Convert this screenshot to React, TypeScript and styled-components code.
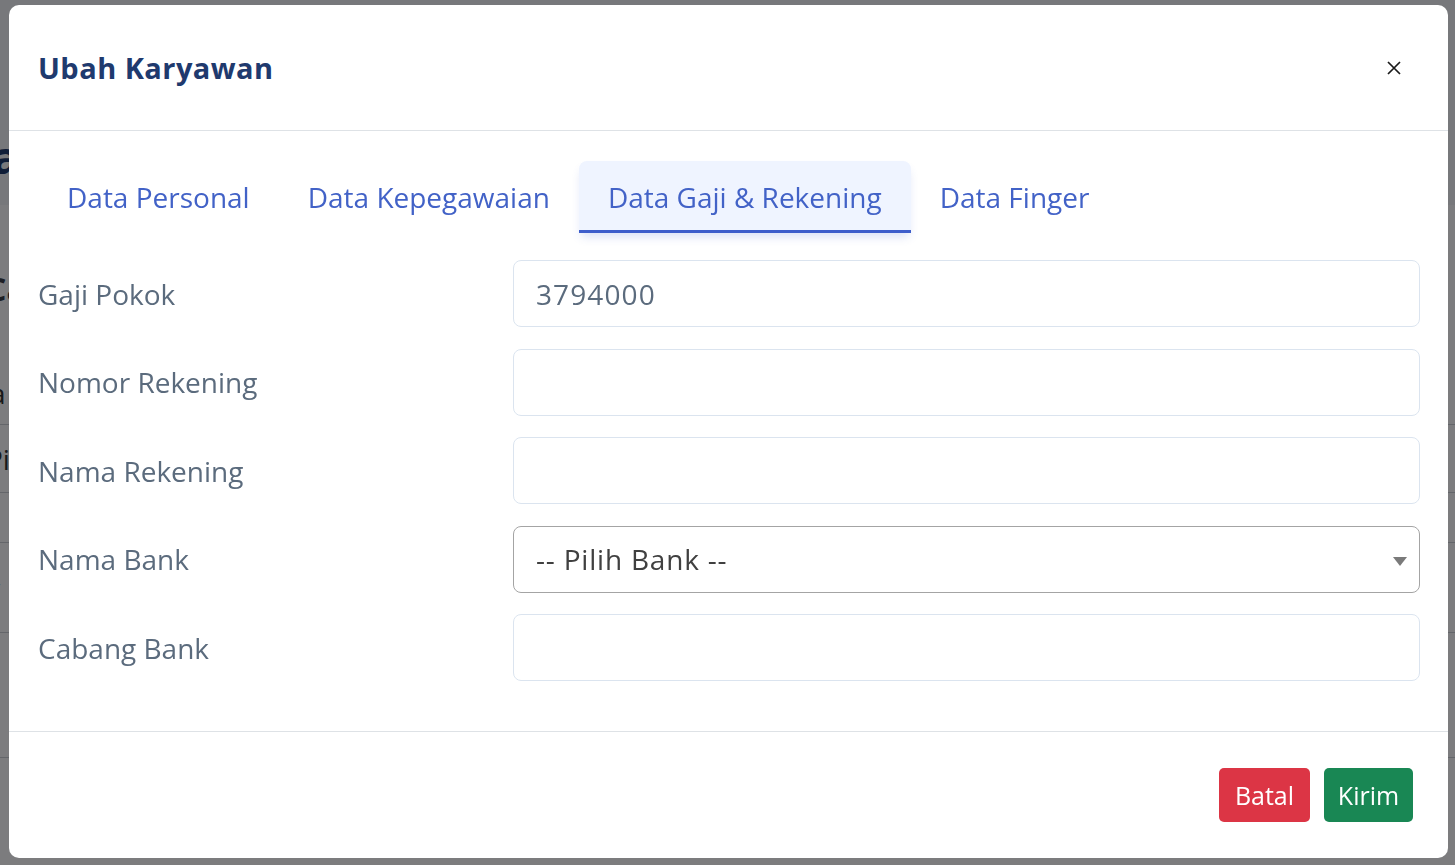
import React from "react";
import styled, { createGlobalStyle } from "styled-components";

const GlobalStyle = createGlobalStyle`
  html, body { margin: 0; padding: 0; }
  body {
    width: 1455px;
    height: 865px;
    overflow: hidden;
    background: #f8f9fd;
    font-family: "Open Sans", "Noto Sans", sans-serif;
  }
  * { box-sizing: border-box; }
`;

const FONT = `"Open Sans", "Noto Sans", sans-serif`;

/* ---------- background page (behind the backdrop) ---------- */
const Page = styled.div`
  width: 1455px;
  height: 865px;
  display: flex;
  flex-direction: column;
  font-family: ${FONT};
`;

const PageTop = styled.div`
  height: 205px;
  background: #eef0f6;
  color: #1f3a6e;
  font-size: 44px;
  font-weight: 700;
  display: flex;
  align-items: flex-end;
  padding-bottom: 18px;
  margin-left: -40px;
`;

const PageCard = styled.div`
  height: 220px;
  display: flex;
  flex-direction: column;
  justify-content: space-between;
  padding: 62px 0 12px;
  border-bottom: 1px solid #c9ccd4;
  color: #333;
  font-size: 28px;
  margin-left: -10px;
`;

const CardTitle = styled.div`
  font-weight: 700;
  font-size: 32px;
  color: #3a3f4a;
  margin-left: -4px;
`;

const PageRow = styled.div<{ $h: number }>`
  height: ${(p) => p.$h}px;
  border-bottom: 1px solid #c9ccd4;
  color: #333;
  font-size: 28px;
  display: flex;
  align-items: center;
  margin-left: -14px;
`;

/* ---------- overlay + modal ---------- */
const Backdrop = styled.div`
  position: fixed;
  inset: 0;
  background: rgba(0, 0, 0, 0.5);
  display: flex;
  align-items: flex-start;
  padding: 5px 7px 0 9px;
`;

const Modal = styled.div`
  width: 1439px;
  background: #ffffff;
  border-radius: 10px;
  display: flex;
  flex-direction: column;
  font-family: ${FONT};
`;

const Header = styled.div`
  height: 126px;
  display: flex;
  align-items: center;
  justify-content: space-between;
  padding: 0 46px 0 29px;
  border-bottom: 1px solid #dee2e6;
`;

const Title = styled.h5`
  margin: 0;
  font-size: 29px;
  font-weight: 700;
  color: #1f3a6e;
  letter-spacing: 0.45px;
`;

const CloseButton = styled.button`
  width: 16px;
  height: 16px;
  padding: 0;
  border: 0;
  background: transparent;
  display: flex;
  align-items: center;
  justify-content: center;
  cursor: pointer;
`;

const Body = styled.div`
  padding: 30px 28px 50px 29px;
  display: flex;
  flex-direction: column;
`;

const TabList = styled.div`
  display: flex;
  height: 72px;
  margin-bottom: 27px;
`;

const Tab = styled.div<{ $active?: boolean }>`
  height: 72px;
  padding: 2px 29px 0;
  display: flex;
  align-items: center;
  font-size: 28px;
  color: #4262c7;
  border-radius: 8px 8px 0 0;
  background: ${(p) => (p.$active ? "#eff4ff" : "transparent")};
  border-bottom: 3px solid ${(p) => (p.$active ? "#3e5ecb" : "transparent")};
  box-shadow: ${(p) =>
    p.$active ? "0 6px 10px -2px rgba(62, 94, 203, 0.18)" : "none"};
`;

const Rows = styled.div`
  display: flex;
  flex-direction: column;
  gap: 21.5px;
`;

const Row = styled.div`
  display: grid;
  grid-template-columns: 475px 1fr;
  align-items: center;
`;

const Label = styled.label`
  font-size: 28px;
  color: #5b6b7d;
`;

const Input = styled.input`
  height: 67px;
  width: 100%;
  border: 1px solid #dbe4ef;
  border-radius: 8px;
  padding: 0 22px;
  font-family: ${FONT};
  font-size: 28px;
  letter-spacing: 1.1px;
  color: #5b6b7d;
  background: #fff;
  outline: none;
`;

const SelectBox = styled.div`
  height: 67px;
  width: 100%;
  border: 1px solid #a4a4a4;
  border-radius: 8px;
  padding: 0 12px 0 22px;
  display: flex;
  align-items: center;
  justify-content: space-between;
  font-size: 28px;
  letter-spacing: 0.8px;
  color: #404040;
`;

const Caret = styled.span`
  width: 0;
  height: 0;
  border-left: 7px solid transparent;
  border-right: 7px solid transparent;
  border-top: 9px solid #7a7a7a;
  margin-top: 4px;
`;

const Footer = styled.div`
  height: 127px;
  border-top: 1px solid #dee2e6;
  display: flex;
  justify-content: flex-end;
  align-items: flex-start;
  gap: 14px;
  padding: 36px 35px 0 0;
`;

const Button = styled.button<{ $variant: "danger" | "success"; $w: number }>`
  height: 54px;
  width: ${(p) => p.$w}px;
  padding: 0;
  border: 0;
  border-radius: 5px;
  font-family: ${FONT};
  font-size: 25px;
  color: #fff;
  background: ${(p) => (p.$variant === "danger" ? "#dc3545" : "#198754")};
  cursor: pointer;
`;

const fields = [
  { label: "Gaji Pokok", value: "3794000" },
  { label: "Nomor Rekening", value: "" },
  { label: "Nama Rekening", value: "" },
  { label: "Nama Bank", select: true },
  { label: "Cabang Bank", value: "" },
];

export default function App() {
  return (
    <>
      <GlobalStyle />
      <Page>
        <PageTop>Data</PageTop>
        <PageCard>
          <CardTitle>Ca</CardTitle>
          <div>a</div>
        </PageCard>
        <PageRow $h={68}>Pi</PageRow>
        <PageRow $h={50}></PageRow>
        <PageRow $h={90}>y</PageRow>
        <PageRow $h={125}></PageRow>
      </Page>
      <Backdrop>
        <Modal>
          <Header>
            <Title>Ubah Karyawan</Title>
            <CloseButton aria-label="Close">
              <svg width="14" height="14" viewBox="0 0 14 14">
                <path d="M1 1 L13 13 M13 1 L1 13" stroke="#1a1a1a" strokeWidth="1.7" />
              </svg>
            </CloseButton>
          </Header>
          <Body>
            <TabList>
              <Tab>Data Personal</Tab>
              <Tab>Data Kepegawaian</Tab>
              <Tab $active>Data Gaji &amp; Rekening</Tab>
              <Tab>Data Finger</Tab>
            </TabList>
            <Rows>
              {fields.map((f) => (
                <Row key={f.label}>
                  <Label>{f.label}</Label>
                  {f.select ? (
                    <SelectBox>
                      <span>-- Pilih Bank --</span>
                      <Caret />
                    </SelectBox>
                  ) : (
                    <Input defaultValue={f.value} />
                  )}
                </Row>
              ))}
            </Rows>
          </Body>
          <Footer>
            <Button $variant="danger" $w={91}>Batal</Button>
            <Button $variant="success" $w={89}>Kirim</Button>
          </Footer>
        </Modal>
      </Backdrop>
    </>
  );
}
